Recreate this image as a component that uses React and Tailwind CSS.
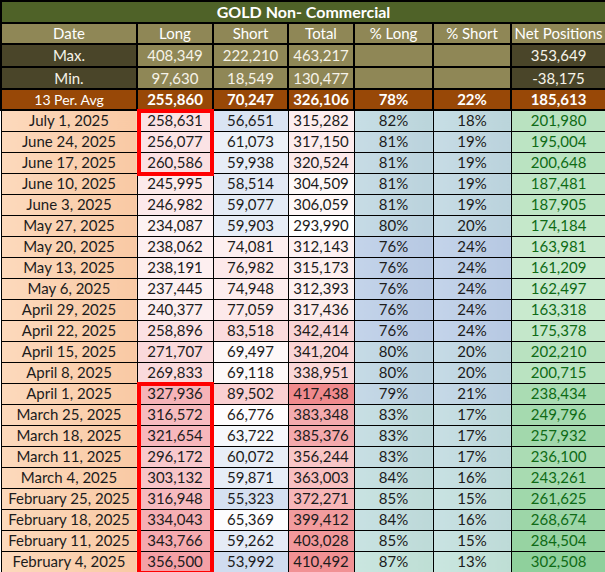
const rows = [
  ["July 1, 2025", 258631, 56651, 315282, 82, 18, 201980],
  ["June 24, 2025", 256077, 61073, 317150, 81, 19, 195004],
  ["June 17, 2025", 260586, 59938, 320524, 81, 19, 200648],
  ["June 10, 2025", 245995, 58514, 304509, 81, 19, 187481],
  ["June 3, 2025", 246982, 59077, 306059, 81, 19, 187905],
  ["May 27, 2025", 234087, 59903, 293990, 80, 20, 174184],
  ["May 20, 2025", 238062, 74081, 312143, 76, 24, 163981],
  ["May 13, 2025", 238191, 76982, 315173, 76, 24, 161209],
  ["May 6, 2025", 237445, 74948, 312393, 76, 24, 162497],
  ["April 29, 2025", 240377, 77059, 317436, 76, 24, 163318],
  ["April 22, 2025", 258896, 83518, 342414, 76, 24, 175378],
  ["April 15, 2025", 271707, 69497, 341204, 80, 20, 202210],
  ["April 8, 2025", 269833, 69118, 338951, 80, 20, 200715],
  ["April 1, 2025", 327936, 89502, 417438, 79, 21, 238434],
  ["March 25, 2025", 316572, 66776, 383348, 83, 17, 249796],
  ["March 18, 2025", 321654, 63722, 385376, 83, 17, 257932],
  ["March 11, 2025", 296172, 60072, 356244, 83, 17, 236100],
  ["March 4, 2025", 303132, 59871, 363003, 84, 16, 243261],
  ["February 25, 2025", 316948, 55323, 372271, 85, 15, 261625],
  ["February 18, 2025", 334043, 65369, 399412, 84, 16, 268674],
  ["February 11, 2025", 343766, 59262, 403028, 85, 15, 284504],
  ["February 4, 2025", 356500, 53992, 410492, 87, 13, 302508],
];

// red outlines in the Long column: [first, last] row index
const boxes = [
  [0, 2],
  [13, 21],
];

const fmt = (n) => n.toLocaleString("en-US");

const mix = (a, b, t) => {
  const k = Math.max(0, Math.min(1, t));
  const c = a.map((v, i) => Math.round(v + (b[i] - v) * k));
  return `rgb(${c[0]},${c[1]},${c[2]})`;
};

const longBg = (v) => mix([253, 242, 243], [244, 160, 166], (v - 234000) / (356500 - 234000));
const totalBg = (v) => mix([255, 255, 255], [240, 138, 141], (v - 298000) / (417438 - 298000));
const shortBg = (v) =>
  v < 66000
    ? mix([255, 255, 255], [208, 220, 239], (66000 - v) / (66000 - 53992))
    : mix([255, 255, 255], [250, 208, 210], (v - 66000) / (89502 - 66000));
const pctBg = (p) => {
  const t = (p - 76) / 11;
  return `linear-gradient(to right, ${mix([196, 212, 234], [202, 230, 224], t)}, ${mix([182, 200, 226], [190, 222, 212], t)})`;
};
const netBg = (v) => mix([202, 234, 207], [143, 208, 156], (v - 161209) / (302508 - 161209));

const inBox = (i) => boxes.find(([a, b]) => i >= a && i <= b);

const Head = ({ children, className = "" }) => (
  <td className={`border-2 border-black p-0 text-center align-middle ${className}`}>{children}</td>
);

const Cell = ({ children, className = "", style }) => (
  <td className={`relative border border-black p-0 text-center align-middle ${className}`} style={style}>
    {children}
  </td>
);

export default function App() {
  return (
    <div className="w-[605px] bg-white" style={{ fontFamily: "Lato, 'Open Sans', sans-serif" }}>
      <table className="w-[605px] table-fixed border-collapse text-[15px] leading-none">
        <colgroup>
          <col className="w-[136px]" />
          <col className="w-[76px]" />
          <col className="w-[75px]" />
          <col className="w-[66px]" />
          <col className="w-[79px]" />
          <col className="w-[78px]" />
          <col className="w-[95px]" />
        </colgroup>
        <tbody>
          <tr className="h-[22px] bg-[#4f6228] text-white">
            <td colSpan={7} className="border-2 border-black p-0 text-center text-[16px] font-bold">
              GOLD Non- Commercial
            </td>
          </tr>
          <tr className="h-[21px] bg-[#8f8756] text-white">
            <Head>Date</Head>
            <Head>Long</Head>
            <Head>Short</Head>
            <Head>Total</Head>
            <Head>% Long</Head>
            <Head>% Short</Head>
            <Head>Net Positions</Head>
          </tr>
          <tr className="h-[23px] text-[#f6f3e8]">
            <Head className="bg-[#4a4529]">Max.</Head>
            <Head className="bg-[#8f8756]">408,349</Head>
            <Head className="bg-[#8f8756]">222,210</Head>
            <Head className="bg-[#8f8756]">463,217</Head>
            <Head className="bg-[#8f8756]"></Head>
            <Head className="bg-[#8f8756]"></Head>
            <Head className="bg-[#4a4529]">353,649</Head>
          </tr>
          <tr className="h-[22px] text-[#f6f3e8]">
            <Head className="bg-[#4a4529]">Min.</Head>
            <Head className="bg-[#8f8756]">97,630</Head>
            <Head className="bg-[#8f8756]">18,549</Head>
            <Head className="bg-[#8f8756]">130,477</Head>
            <Head className="bg-[#8f8756]"></Head>
            <Head className="bg-[#8f8756]"></Head>
            <Head className="bg-[#4a4529]">-38,175</Head>
          </tr>
          <tr className="h-[21px] bg-[#984807] text-white">
            <Head className="text-[14px]">13 Per. Avg</Head>
            <Head className="font-bold">255,860</Head>
            <Head className="font-bold">70,247</Head>
            <Head className="font-bold">326,106</Head>
            <Head className="font-bold">78%</Head>
            <Head className="font-bold">22%</Head>
            <Head className="font-bold">185,613</Head>
          </tr>
          {rows.map(([date, lng, sht, tot, pl, ps, net], i) => {
            const box = inBox(i);
            return (
              <tr key={date} className="h-[21px] text-[#1c1c1c]">
                <Cell className="bg-linear-to-r from-[#fcd9bc] to-[#f9c9a4]">{date}</Cell>
                <Cell style={{ background: longBg(lng) }}>
                  {fmt(lng)}
                  {box && (
                    <span
                      className={`pointer-events-none absolute z-10 -left-px -right-px border-x-4 border-[#ff0000] ${
                        i === box[0] ? "-top-[2px] border-t-4" : "-top-px"
                      } ${i === box[1] ? "-bottom-[3px] border-b-4" : "-bottom-px"}`}
                    />
                  )}
                </Cell>
                <Cell style={{ background: shortBg(sht) }}>{fmt(sht)}</Cell>
                <Cell style={{ background: totalBg(tot) }}>{fmt(tot)}</Cell>
                <Cell style={{ background: pctBg(pl) }}>{pl}%</Cell>
                <Cell style={{ background: pctBg(pl) }}>{ps}%</Cell>
                <Cell className="text-[#0f6b16]" style={{ background: netBg(net) }}>
                  {fmt(net)}
                </Cell>
              </tr>
            );
          })}
        </tbody>
      </table>
    </div>
  );
}
